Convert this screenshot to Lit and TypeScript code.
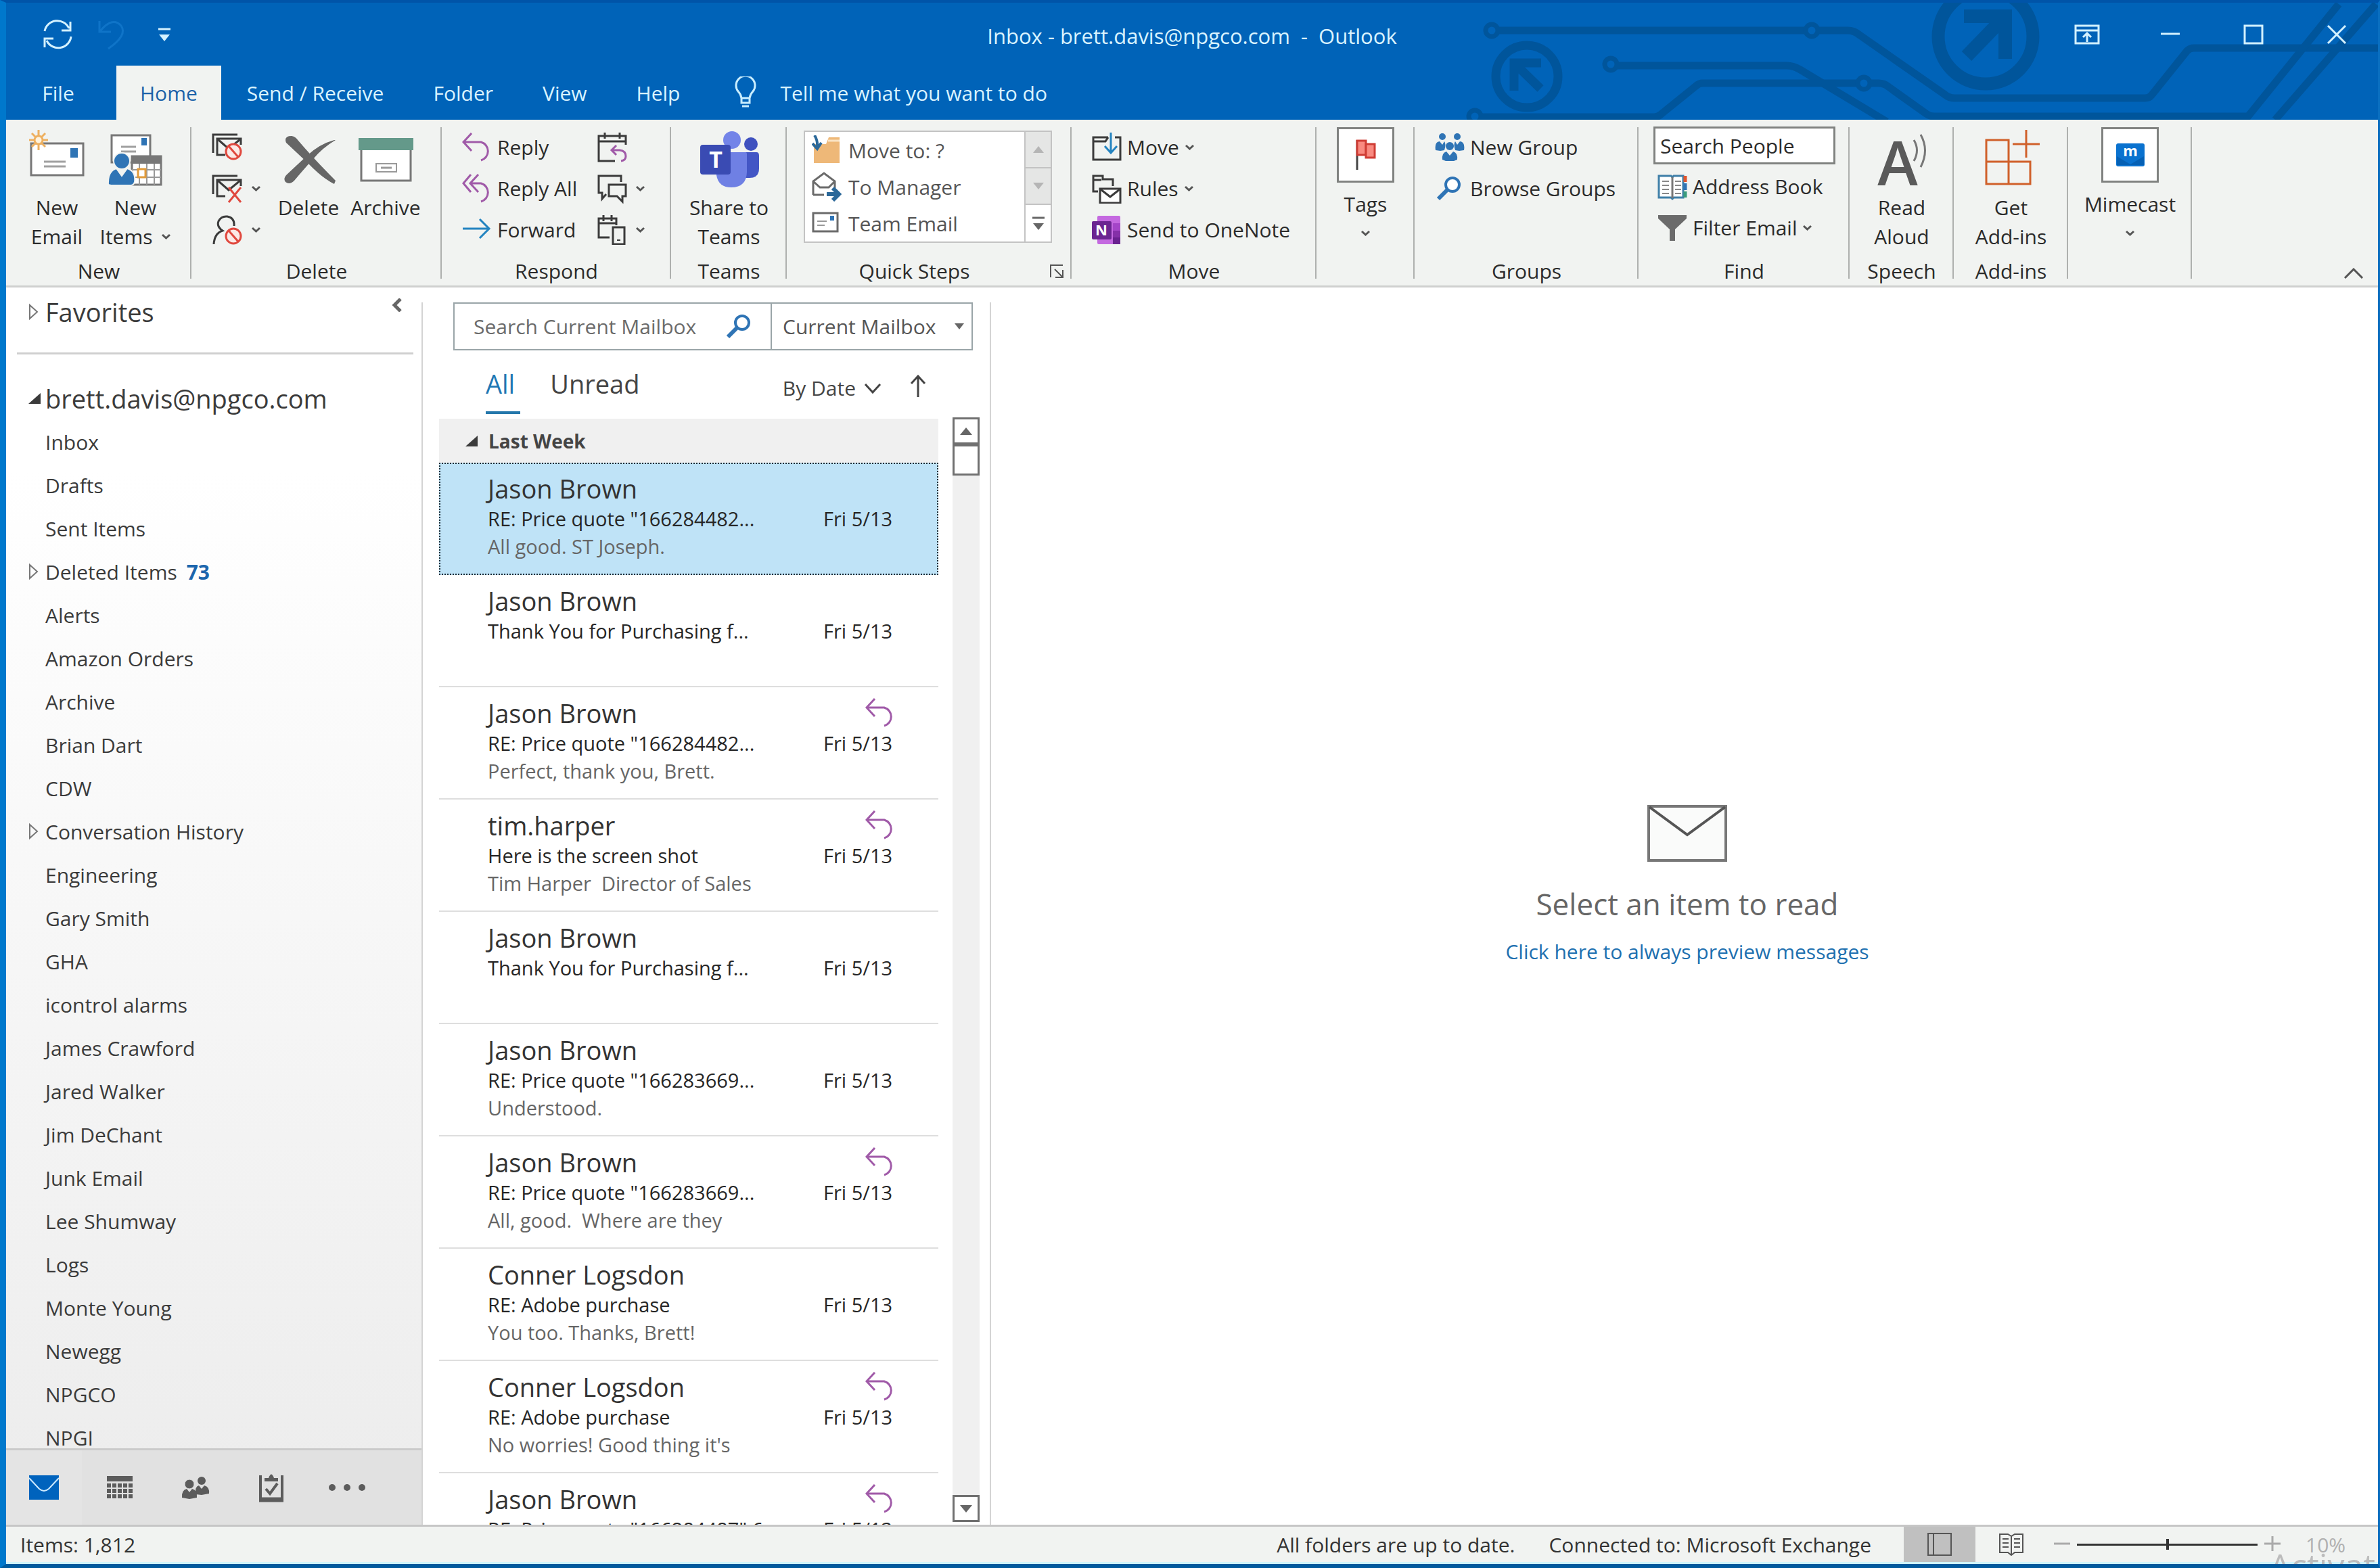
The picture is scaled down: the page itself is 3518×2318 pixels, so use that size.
import { LitElement, html, svg, css, nothing } from "lit";
import { customElement, property, state } from "lit/decorators.js";
import { classMap } from "lit/directives/class-map.js";

const INK = "#3b3b3b";
const BLUE = "#2f74b5";
const PURPLE = "#a05aa8";
const RED = "#e0483e";

/* ---------- shared fragments ---------- */

const frame = (w: number, h: number, body: unknown) =>
  html`<svg width=${w} height=${h} viewBox="0 0 ${w} ${h}" fill="none" aria-hidden="true">${body}</svg>`;

const prohibit = (x: number, y: number) => svg`
  <circle cx=${x} cy=${y} r="11" fill="#fbe9e6" stroke=${RED} stroke-width="3"/>
  <path d="M${x - 7} ${y - 8}L${x + 7} ${y + 8}" stroke=${RED} stroke-width="3"/>`;

const stackedMail = svg`
  <path d="M2 30V3H38" stroke=${INK} stroke-width="3"/>
  <path d="M43 18V9H8V33H20" stroke=${INK} stroke-width="3"/>
  <path d="M9 10L25 24L42 10" stroke=${INK} stroke-width="3"/>`;

const chevron = (w = 15, h = 9, color = "#555", stroke = 3) =>
  frame(w, h, svg`<path d="M2 2L${w / 2} ${h - 2}L${w - 2} 2" stroke=${color} stroke-width=${stroke}/>`);

const solidArrow = (down: boolean, w = 18, h = 11, color = "#666") =>
  frame(w, h, svg`<path d=${down ? `M0 0H${w}L${w / 2} ${h}Z` : `M0 ${h}H${w}L${w / 2} 0Z`} fill=${color}/>`);

const overflowArrow = (color: string) =>
  frame(18, 22, svg`<path d="M0 3H18" stroke=${color} stroke-width="3"/><path d="M1 11H17L9 21Z" fill=${color}/>`);

const openTriangle = frame(16, 26, svg`<path d="M2 3V23L13 13Z" stroke="#777" stroke-width="2"/>`);
const closedTriangle = frame(18, 16, svg`<path d="M18 0V16H0Z" fill=${INK}/>`);

const magnifier = frame(38, 38, svg`
  <circle cx="24" cy="13" r="10" fill="#fff" stroke=${BLUE} stroke-width="4"/>
  <path d="M17 20L3 34" stroke=${BLUE} stroke-width="6"/>`);

const replyGlyph = (color = PURPLE) => frame(44, 44, svg`
  <path d="M14 1L2 14L14 27M2 14H28A14 14 0 0 1 28 41" stroke=${color} stroke-width="3"/>`);

/* ---------- ribbon icons, large (84 x 98) ---------- */

const newEmail = frame(84, 98, svg`
  <rect x="4" y="25" width="77" height="47" fill="#fff" stroke="#777" stroke-width="3"/>
  <rect x="62" y="32" width="11" height="14" fill=${BLUE}/>
  <path d="M23 52H55M23 59H55" stroke="#a0a0a0" stroke-width="3"/>
  <path d="M15 5V35M1 20H29M5 10L25 30M25 10L5 30" stroke="#eeb060" stroke-width="3"/>
  <circle cx="15" cy="20" r="6" fill="#fff3dd" stroke="#eeb060" stroke-width="3"/>`);

const newItems = frame(84, 98, svg`
  <rect x="7" y="13" width="57" height="40" fill="#fff" stroke="#777" stroke-width="3"/>
  <rect x="51" y="17" width="8" height="11" fill=${BLUE}/>
  <path d="M21 30H43M21 37H43" stroke="#a0a0a0" stroke-width="3"/>
  <rect x="37" y="44" width="43" height="42" fill="#fff" stroke="#777" stroke-width="3"/>
  <rect x="36" y="43" width="45" height="12" fill="#777"/>
  <path d="M37 64H80M37 75H80M48 55V86M59 55V86M70 55V86" stroke="#999" stroke-width="2"/>
  <rect x="46" y="63" width="11" height="12" fill="#fff" stroke="#e09a3a" stroke-width="3"/>
  <circle cx="22" cy="51" r="12" fill=${BLUE} stroke="#f1f3f1" stroke-width="2"/>
  <path d="M2 86Q1 66 14 62L22 73L30 62Q43 66 41 82Q40 86 36 87H6Z" fill=${BLUE} stroke="#f1f3f1" stroke-width="2"/>`);

const deleteX = frame(84, 98, svg`
  <path d="M9 24Q5 14 17 14Q23 15 27 21Q50 48 82 80L80 85Q62 76 42 55Q24 38 9 24Z" fill="#666"/>
  <path d="M82 20Q62 32 49 48Q36 62 21 80Q14 87 8 82Q4 77 10 71Q26 56 40 43Q58 26 80 20Z" fill="#666"/>`);

const archiveBox = frame(84, 98, svg`
  <rect x="6" y="30" width="73" height="50" fill="#fff" stroke="#777" stroke-width="3"/>
  <rect x="2" y="17" width="81" height="18" fill="#64998a"/>
  <rect x="28" y="55" width="30" height="12" fill="#fff" stroke="#999" stroke-width="2"/>
  <path d="M35 61H51" stroke="#999" stroke-width="3"/>`);

const teams = frame(88, 98, svg`
  <circle cx="76" cy="26" r="10" fill="#3f51bf"/>
  <path d="M62 38H84Q88 38 88 43V62Q88 76 74 76H62Z" fill="#4356c5"/>
  <circle cx="48" cy="20" r="13" fill="#7384e8"/>
  <path d="M26 38H68Q70 38 70 41V66Q70 90 47 90Q28 90 25 72Z" fill="#6f80e4"/>
  <rect x="1" y="27" width="45" height="44" rx="4" fill="#3a4bb3"/>
  <text x="24" y="61" text-anchor="middle" font-size="34" font-weight="700" fill="#fff">T</text>`);

const readAloud = frame(84, 98, svg`
  <text x="36" y="87" text-anchor="middle" font-size="90" font-weight="600" fill="#5a5a5a">A</text>
  <path d="M60 20Q69 35 60 51M70 12Q83 35 70 60" stroke="#777" stroke-width="3"/>`);

const addIns = frame(88, 98, svg`
  <path d="M7 20H40V52H7ZM7 52H40V85H7ZM40 52H72V85H40Z" stroke="#d0602a" stroke-width="3"/>
  <path d="M66 5V46M46 26H86" stroke="#d0602a" stroke-width="3"/>`);

const flag = frame(79, 76, svg`
  <path d="M27 16V60" stroke="#444" stroke-width="3"/>
  <path d="M27 17H40V38H27Z" fill="#f98a80" stroke="#cf3c34" stroke-width="3"/>
  <path d="M40 22H53V42H40Z" fill="#f98a80" stroke="#cf3c34" stroke-width="3"/>`);

const mimecast = frame(79, 76, svg`
  <rect x="19" y="21" width="42" height="34" rx="3" fill="#0a72cf"/>
  <path d="M20 40L40 52L60 40V53H20Z" fill="#0560b4"/>
  <text x="40" y="40" text-anchor="middle" font-size="22" font-weight="700" fill="#fff">m</text>`);

/* ---------- ribbon icons, small (44 x 44) ---------- */

const ignore = frame(46, 44, svg`${stackedMail}${prohibit(32, 28)}`);
const cleanUp = frame(46, 44, svg`${stackedMail}<path d="M25 20L43 42M43 20L25 42" stroke=${RED} stroke-width="3"/>`);
const junk = frame(46, 44, svg`
  <path d="M3 43Q4 27 16 23Q7 17 10 9Q14 1 23 2Q34 4 33 16" stroke=${INK} stroke-width="3"/>${prohibit(32, 31)}`);
const replyAll = frame(44, 44, svg`
  <path d="M13 1L2 14L13 27M24 1L12 14L24 27M12 14H28A14 14 0 0 1 28 41" stroke=${PURPLE} stroke-width="3"/>`);
const forward = frame(44, 44, svg`<path d="M1 20H40M26 6L40 20L26 34" stroke="#2484c0" stroke-width="3"/>`);
const meeting = frame(44, 44, svg`
  <path d="M42 18V5H2V42H26M2 13H42M11 0V9M33 0V9" stroke=${INK} stroke-width="3"/>
  <path d="M28 19L21 26L28 33M21 26H33Q42 27 42 35Q42 41 35 42" stroke=${PURPLE} stroke-width="3"/>`);
const chat = frame(44, 44, svg`
  <path d="M35 12V3H2V28H7V37L13 30" stroke=${INK} stroke-width="3"/>
  <path d="M17 16H42V33H37V41L29 33H17Z" stroke=${INK} stroke-width="3"/>`);
const moreRespond = frame(44, 44, svg`
  <path d="M28 15V5H2V33H18M2 12H28M9 0V9M21 0V9" stroke=${INK} stroke-width="3"/>
  <rect x="23" y="18" width="17" height="25" stroke=${INK} stroke-width="3"/><path d="M29 37H34" stroke=${INK} stroke-width="2"/>`);

const folderStep = frame(44, 44, svg`
  <path d="M3 13H21L25 3H41V41H3Z" fill="#eeb878"/><path d="M24 8H41" stroke="#fae3c3" stroke-width="3"/>
  <path d="M4 0Q9 8 8 18M1 12L8 20L14 11" stroke="#2b6899" stroke-width="4"/>`);
const managerStep = frame(44, 44, svg`
  <path d="M2 34V14L18 2L34 14V24M2 14L12 23H25L34 14M2 34H18" stroke="#6b6b6b" stroke-width="3"/>
  <path d="M22 33H38M31 24L40 33L31 42" stroke="#2b6899" stroke-width="6"/>`);
const teamStep = frame(44, 44, svg`
  <rect x="2" y="7" width="36" height="27" fill="#fff" stroke="#6b6b6b" stroke-width="3"/>
  <rect x="27" y="11" width="6" height="7" fill=${BLUE}/><path d="M8 19H22M8 25H19" stroke="#999" stroke-width="2"/>`);

const moveIcon = frame(44, 44, svg`
  <path d="M24 7H2V40H42V7H34M2 13H20L24 7" stroke=${INK} stroke-width="3"/>
  <path d="M28 0V29M19 20L28 30L37 20" stroke="#2484c0" stroke-width="3"/>`);
const rulesIcon = frame(44, 44, svg`
  <path d="M9 26H2V3H16V8H31V18M2 9H14" stroke=${INK} stroke-width="3"/>
  <rect x="12" y="22" width="30" height="21" fill="#fff" stroke=${INK} stroke-width="3"/><path d="M13 23L27 34L41 23" stroke=${INK} stroke-width="3"/>`);
const oneNote = frame(44, 44, svg`
  <rect x="8" y="1" width="34" height="42" rx="2" fill="#c469e0"/><rect x="31" y="12" width="11" height="11" fill="#a445c8"/>
  <rect x="31" y="23" width="11" height="10" fill="#8530a8"/><rect x="31" y="33" width="11" height="10" fill="#6a2190"/>
  <rect x="0" y="9" width="29" height="27" rx="2" fill="#6b2591"/>
  <text x="14" y="30" text-anchor="middle" font-size="22" font-weight="700" fill="#fff">N</text>`);
const newGroup = frame(44, 44, svg`
  <g fill=${BLUE}><circle cx="11" cy="6" r="5"/><circle cx="33" cy="6" r="5"/><circle cx="22" cy="20" r="6"/>
  <path d="M1 26Q-1 14 7 13L11 18L14 13Q17 17 14 26L8 27ZM43 26Q45 14 37 13L33 18L30 13Q27 17 30 26L36 27Z"/>
  <path d="M11 40Q10 30 17 28L22 34L27 28Q34 30 33 40L28 42H16Z"/></g>`);
const browseGroups = frame(44, 38, svg`
  <circle cx="26" cy="13" r="10" fill="#fff" stroke=${BLUE} stroke-width="4"/>
  <path d="M19 20L5 34" stroke=${BLUE} stroke-width="6"/>`);
const addressBook = frame(44, 44, svg`
  <path d="M2 6V38H20L22 40L24 38H38V6H24L22 8L20 6Z" fill="#fff" stroke="#3f7fa8" stroke-width="3"/>
  <path d="M22 8V39" stroke="#777" stroke-width="3"/>
  <path d="M7 14H17M7 20H17M7 26H17M7 32H17M26 14H35M26 20H35M26 26H35M26 32H35" stroke="#888" stroke-width="2"/>
  <path d="M41 6V15" stroke="#e0552c" stroke-width="5"/><path d="M41 17V27" stroke="#2f74b5" stroke-width="5"/><path d="M41 29V38" stroke="#3a9c7c" stroke-width="5"/>`);
const funnel = frame(44, 44, svg`<path d="M1 3H43V8L26 24V41H18V24L1 8Z" fill="#6b6b6b"/>`);

/* ---------- navigation and status icons ---------- */

const navMail = frame(44, 36, svg`<rect width="44" height="36" fill="#0063bd"/>
  <path d="M0 4L15 20Q22 26 29 20L44 4" stroke="#cdeaff" stroke-width="2"/>`);
const navCalendar = frame(40, 34, svg`<rect x="1" width="38" height="8" fill="#5c5c5c"/>
  <path d="M1 14H39M1 22H39M1 30H39" stroke="#5c5c5c" stroke-width="6" stroke-dasharray="6 2"/>`);
const navPeople = frame(42, 34, svg`<g fill="#5c5c5c"><circle cx="30" cy="7" r="6"/>
  <path d="M21 27Q20 15 26 14L30 19L34 14Q42 16 41 26L30 28Z"/>
  <circle cx="12" cy="12" r="7" stroke="#e1e1e1" stroke-width="1"/><path d="M1 32Q0 21 8 19L12 24L16 19Q24 21 23 32L12 34Z"/></g>`);
const navTasks = frame(38, 44, svg`<path d="M3 4V41H35V4" stroke="#5c5c5c" stroke-width="4"/><path d="M1 40H37" stroke="#5c5c5c" stroke-width="7"/>
  <path d="M9 13V8H15Q19 -3 23 8H29V13Z" fill="#5c5c5c"/><path d="M11 24L17 31L28 16" stroke="#5c5c5c" stroke-width="4"/>`);
const navMore = frame(56, 12, svg`<g fill="#5c5c5c"><circle cx="6" cy="6" r="5"/><circle cx="28" cy="6" r="5"/><circle cx="50" cy="6" r="5"/></g>`);

const normalView = frame(38, 36, svg`<rect x="2" y="2" width="34" height="32" stroke="#555" stroke-width="2"/><path d="M10 2V34" stroke="#555" stroke-width="2"/>`);
const readingView = frame(38, 36, svg`<path d="M19 6L14 3H2V30H14L19 34L24 30H36V3H24ZM19 6V34" stroke="#555" stroke-width="2"/>
  <path d="M6 10H15M6 16H15M6 22H15M23 10H32M23 16H32M23 22H32" stroke="#555" stroke-width="2"/>`);

const syncIcon = frame(48, 46, svg`
  <path d="M4 18A19 19 0 0 1 40 14M43 26A19 19 0 0 1 7 32M42 4V17H29M4 42V29H17" stroke="#d3f1ff" stroke-width="3"/>`);
const undoIcon = frame(44, 46, svg`<path d="M3 3V19H20M4 18Q22 -4 35 10Q45 24 16 44" stroke="#0f74c8" stroke-width="3"/>`);
const bulb = frame(34, 48, svg`<path d="M11 32Q10 26 6 22A14 14 0 1 1 28 22Q24 26 23 32ZM11 32V39H23V32M12 44H22" stroke="#c9eeff" stroke-width="3"/>`);

const winRibbon = frame(38, 30, svg`<path d="M2 2H36V28H2ZM2 9H36M19 26V13M13 19L19 13L25 19" stroke="#d3f1ff" stroke-width="3"/>`);
const winMin = frame(30, 30, svg`<path d="M1 14H29" stroke="#d3f1ff" stroke-width="3"/>`);
const winMax = frame(30, 30, svg`<rect x="2" y="2" width="26" height="26" stroke="#d3f1ff" stroke-width="3"/>`);
const winClose = frame(30, 30, svg`<path d="M2 2L28 28M28 2L2 28" stroke="#d3f1ff" stroke-width="3"/>`);

/* Circuit-board decoration of the title area */
const circuit = html`<svg class="circuit" width="1438" height="177" viewBox="2080 0 1438 177" fill="none" stroke="#00559b" stroke-width="11" aria-hidden="true">
  <circle cx="2208" cy="45" r="9" stroke-width="7"/><path d="M2218 45H2671"/><circle cx="2681" cy="45" r="9" stroke-width="7"/>
  <path d="M2691 45H2734Q2744 45 2752 52L2878 140Q2884 145 2892 145H3174Q3180 145 3183 141L3236 75Q3240 71 3246 71H3518"/>
  <circle cx="2384" cy="95" r="9" stroke-width="7"/><path d="M2394 97H2644Q2654 97 2664 103L2792 180"/>
  <circle cx="2183" cy="172" r="9" stroke-width="7"/>
  <path d="M2193 173H2448Q2454 173 2458 169L2510 127Q2514 123 2520 123H2748"/><circle cx="2758" cy="123" r="9" stroke-width="7"/>
  <path d="M2768 123H2780Q2788 123 2794 128L2850 168Q2855 172 2862 172H3326L3460 6M3366 177L3515 6"/>
  <circle cx="2260" cy="113" r="46" stroke-width="13"/><path d="M2281 93H2241V134M2241 93L2280 131" stroke-width="13"/>
  <circle cx="2938" cy="54" r="70" stroke-width="19"/><path d="M2906 24H2967V87M2967 24L2910 83" stroke-width="20"/>
</svg>`;

/* ---------- data ---------- */

interface Folder { name: string; count?: number; expandable?: boolean; }
interface Message { from: string; subject: string; preview: string; replied?: boolean; }

const FOLDERS: Folder[] = [
  { name: "Inbox" }, { name: "Drafts" }, { name: "Sent Items" },
  { name: "Deleted Items", count: 73, expandable: true },
  { name: "Alerts" }, { name: "Amazon Orders" }, { name: "Archive" }, { name: "Brian Dart" }, { name: "CDW" },
  { name: "Conversation History", expandable: true },
  { name: "Engineering" }, { name: "Gary Smith" }, { name: "GHA" }, { name: "icontrol alarms" },
  { name: "James Crawford" }, { name: "Jared Walker" }, { name: "Jim DeChant" }, { name: "Junk Email" },
  { name: "Lee Shumway" }, { name: "Logs" }, { name: "Monte Young" }, { name: "Newegg" },
  { name: "NPGCO" }, { name: "NPGI" },
];

const MESSAGES: Message[] = [
  { from: "Jason Brown", subject: "RE: Price quote \"166284482...", preview: "All good. ST Joseph." },
  { from: "Jason Brown", subject: "Thank You for Purchasing f...", preview: "" },
  { from: "Jason Brown", subject: "RE: Price quote \"166284482...", preview: "Perfect, thank you, Brett.", replied: true },
  { from: "tim.harper", subject: "Here is the screen shot", preview: "Tim Harper  Director of Sales", replied: true },
  { from: "Jason Brown", subject: "Thank You for Purchasing f...", preview: "" },
  { from: "Jason Brown", subject: "RE: Price quote \"166283669...", preview: "Understood." },
  { from: "Jason Brown", subject: "RE: Price quote \"166283669...", preview: "All, good.  Where are they", replied: true },
  { from: "Conner Logsdon", subject: "RE: Adobe purchase", preview: "You too. Thanks, Brett!" },
  { from: "Conner Logsdon", subject: "RE: Adobe purchase", preview: "No worries! Good thing it's", replied: true },
  { from: "Jason Brown", subject: "RE: Price quote \"166284487\" 6...", preview: "", replied: true },
];

const base = css`
  * { box-sizing: border-box; }
  button, input, select { font: inherit; color: inherit; background: none; border: 0; padding: 0; margin: 0; outline: 0; text-align: inherit; border-radius: 0; }
  ul { list-style: none; margin: 0; padding: 0; }
  svg { display: block; flex: none; font-family: "Open Sans", sans-serif; }
`;

/* ---------- title bar and tabs ---------- */

@customElement("title-area")
class TitleArea extends LitElement {
  static styles = [base, css`
    :host { display: block; position: relative; background: #0063b8; color: #d9f3ff; overflow: hidden; }
    .circuit { position: absolute; right: 0; bottom: 0; }
    .bar { position: relative; display: grid; grid-template-columns: 1fr auto 1fr; height: 93px; align-items: center; padding-top: 4px; }
    .quick { display: flex; align-items: center; gap: 34px; padding: 0 0 4px 53px; }
    .quick button:last-child { padding-left: 12px; }
    .windows { display: flex; justify-content: flex-end; height: 84px; }
    .windows button { width: 123px; display: flex; align-items: center; justify-content: center; padding-bottom: 4px; }
    .title { font-size: 31px; line-height: 42px; white-space: pre; }
    .tabs { position: relative; display: flex; height: 80px; align-items: stretch; gap: 3px; }
    .tabs a { color: inherit; text-decoration: none; padding: 0 35px; line-height: 82px; }
    .tabs .file { width: 160px; text-align: center; padding: 0 6px 0 0; }
    .tabs .active { background: #f1f3f1; color: #1c62a8; }
    .tell { display: flex; align-items: center; gap: 34px; margin-left: 42px; }
  `];

  render() {
    return html`
      ${circuit}
      <div class="bar">
        <div class="quick">
          <button aria-label="Send and receive">${syncIcon}</button>
          <button aria-label="Undo">${undoIcon}</button>
          <button aria-label="Customize toolbar">${overflowArrow("#d3f1ff")}</button>
        </div>
        <div class="title">Inbox - brett.davis@npgco.com  -  Outlook</div>
        <div class="windows">
          <button aria-label="Ribbon options">${winRibbon}</button>
          <button aria-label="Minimize">${winMin}</button>
          <button aria-label="Maximize">${winMax}</button>
          <button aria-label="Close">${winClose}</button>
        </div>
      </div>
      <nav class="tabs">
        <a class="file" href="#file">File</a>
        <a class="active" href="#home">Home</a>
        ${["Send / Receive", "Folder", "View", "Help"].map((t) => html`<a href="#tab">${t}</a>`)}
        <button class="tell">${bulb}<span>Tell me what you want to do</span></button>
      </nav>`;
  }
}

/* ---------- ribbon ---------- */

@customElement("ribbon-bar")
class RibbonBar extends LitElement {
  static styles = [base, css`
    :host { display: grid; grid-template-columns: 274px 370px 339px 171px 421px 362px 145px 331px 312px 154px 169px 183px 1fr;
      height: 248px; background: #f1f3f1; border-bottom: 3px solid #cfd0cf; color: #2b2b2b; line-height: 43px; }
    .group { display: flex; flex-direction: column; padding-top: 10px; min-width: 0;
      background: linear-gradient(#aeb0ae, #aeb0ae) right 0 top 11px / 2px 224px no-repeat; }
    .content { flex: 1; display: flex; align-items: flex-start; min-height: 0; }
    .center { justify-content: center; }
    .inset { padding-left: 30px; }
    .near { padding-left: 18px; gap: 2px; }
    .caption { display: flex; height: 43px; }
    .caption span { flex: 1; text-align: center; }
    .launcher { width: 44px; display: flex; align-items: center; justify-content: center; }
    .big { width: 114px; display: flex; flex-direction: column; align-items: center; white-space: nowrap; }
    .big .line { display: flex; align-items: center; gap: 12px; }
    .wide { width: 140px; }
    .rows { display: flex; flex-direction: column; }
    .row { height: 61px; display: flex; align-items: center; gap: 8px; white-space: nowrap; }
    .first { width: 200px; }
    .stub { width: 86px; gap: 12px; }
    .gallery { margin: 6px 0 0 25px; width: 367px; height: 166px; display: flex; background: #fff; border: 2px solid #c3c3c3; color: #555; }
    .steps { flex: 1; padding: 0 0 0 10px; }
    .step { height: 54px; display: flex; align-items: center; gap: 10px; width: 100%; }
    .scroll { width: 39px; display: grid; grid-template-rows: 1fr 1fr 1fr; border-left: 2px solid #c3c3c3; }
    .scroll button { display: flex; align-items: center; justify-content: center; background: #e5e6e5; border-bottom: 2px solid #c3c3c3; }
    .scroll button:last-child { background: #fff; border-bottom: 0; }
    .boxed { width: 160px; display: flex; flex-direction: column; align-items: center; padding-top: 1px; }
    .boxed .tile { border: 3px solid #808280; background: #fff; margin-bottom: 10px; }
    .boxed .arrow { height: 43px; display: flex; align-items: center; }
    .find { padding-left: 22px; }
    .people { width: 269px; height: 56px; margin-bottom: 2px; border: 3px solid #808280; background: #fff; padding: 0 7px; }
    .people::placeholder { color: #2b2b2b; opacity: 1; }
    .find .row { padding-left: 6px; gap: 8px; }
    .collapse { align-self: end; justify-self: end; margin: 0 21px 10px 0; }
  `];

  private big(icon: unknown, lines: string[], drop = false, wide = false) {
    return html`<button class=${classMap({ big: true, wide })}>${icon}
      ${lines.map((l, i) => html`<span class="line">${l}${drop && i === lines.length - 1 ? chevron() : nothing}</span>`)}
    </button>`;
  }
  private row(icon: unknown, label: string, drop = false) {
    return html`<button class="row">${icon}<span>${label}</span>${drop ? chevron() : nothing}</button>`;
  }
  private stub(icon: unknown, label: string, drop = true) {
    return html`<button class="row stub" aria-label=${label}>${icon}${drop ? chevron() : nothing}</button>`;
  }
  private boxed(icon: unknown, label: string) {
    return html`<section class="group"><div class="content center">
      <button class="boxed"><span class="tile">${icon}</span><span>${label}</span><span class="arrow">${chevron()}</span></button>
    </div></section>`;
  }
  private group(name: string, cls: string, body: unknown, launcher = false) {
    return html`<section class="group" aria-label=${name}>
      <div class="content ${cls}">${body}</div>
      <div class="caption"><span>${name}</span>${launcher
        ? html`<button class="launcher" aria-label="Quick Steps settings">${frame(22, 22, svg`<path d="M2 20V2H20M8 8L19 19M20 9V20H9" stroke="#555" stroke-width="2"/>`)}</button>`
        : nothing}</div>
    </section>`;
  }

  render() {
    return html`
      ${this.group("New", "near", html`
        ${this.big(newEmail, ["New", "Email"])}${this.big(newItems, ["New", "Items"], true)}`)}
      ${this.group("Delete", "inset", html`
        <div class="rows">${this.stub(ignore, "Ignore", false)}${this.stub(cleanUp, "Clean up")}${this.stub(junk, "Junk")}</div>
        ${this.big(deleteX, ["Delete"])}${this.big(archiveBox, ["Archive"])}`)}
      ${this.group("Respond", "inset", html`
        <div class="rows first">${this.row(replyGlyph(), "Reply")}${this.row(replyAll, "Reply All")}${this.row(forward, "Forward")}</div>
        <div class="rows">${this.stub(meeting, "Meeting", false)}${this.stub(chat, "IM")}${this.stub(moreRespond, "More")}</div>`)}
      ${this.group("Teams", "center", this.big(teams, ["Share to", "Teams"], false, true))}
      ${this.group("Quick Steps", "", html`
        <div class="gallery">
          <div class="steps">
            <button class="step">${folderStep}<span>Move to: ?</span></button>
            <button class="step">${managerStep}<span>To Manager</span></button>
            <button class="step">${teamStep}<span>Team Email</span></button>
          </div>
          <div class="scroll">
            <button aria-label="Up">${solidArrow(false, 16, 10, "#b5b5b5")}</button>
            <button aria-label="Down">${solidArrow(true, 16, 10, "#b5b5b5")}</button>
            <button aria-label="More">${overflowArrow("#666")}</button>
          </div>
        </div>`, true)}
      ${this.group("Move", "inset", html`<div class="rows">
        ${this.row(moveIcon, "Move", true)}${this.row(rulesIcon, "Rules", true)}${this.row(oneNote, "Send to OneNote")}</div>`)}
      ${this.boxed(flag, "Tags")}
      ${this.group("Groups", "inset", html`<div class="rows">
        ${this.row(newGroup, "New Group")}${this.row(browseGroups, "Browse Groups")}</div>`)}
      ${this.group("Find", "find", html`<div class="rows">
        <input class="people" type="text" aria-label="Search People" placeholder="Search People">
        ${this.row(addressBook, "Address Book")}${this.row(funnel, "Filter Email", true)}</div>`)}
      ${this.group("Speech", "center", this.big(readAloud, ["Read", "Aloud"]))}
      ${this.group("Add-ins", "center", this.big(addIns, ["Get", "Add-ins"], false, true))}
      ${this.boxed(mimecast, "Mimecast")}
      <button class="collapse" aria-label="Collapse ribbon">${frame(30, 16, svg`<path d="M2 15L15 2L28 15" stroke="#555" stroke-width="3"/>`)}</button>`;
  }
}

/* ---------- folder pane ---------- */

@customElement("folder-pane")
class FolderPane extends LitElement {
  static styles = [base, css`
    :host { display: flex; flex-direction: column; min-height: 0; color: #3b3b3b; background: linear-gradient(#fff 15%, #ececec); }
    .tree { flex: 1; min-height: 0; overflow: hidden; padding-top: 4px; }
    .head, .folder { width: 100%; height: 64px; display: flex; align-items: center; white-space: nowrap; }
    .head { font-size: 38px; }
    .twist { width: 58px; padding-left: 33px; flex: none; display: flex; }
    .favorites { display: flex; align-items: flex-start; }
    .pin { margin: 12px 29px 0 0; }
    .rule { height: 3px; background: #cfcfcf; margin: 28px 12px 33px 16px; }
    .count { color: #1c66ad; font-weight: 700; margin-left: 14px; }
    .nav { display: flex; height: 113px; background: #e1e1e1; border-top: 3px solid #cbcbcb; }
    .nav button { width: 112px; display: flex; align-items: center; justify-content: center; }
    .nav .on { background: #e4e4e4; }
  `];

  render() {
    return html`
      <div class="tree">
        <div class="favorites">
          <button class="head"><span class="twist">${openTriangle}</span>Favorites</button>
          <button class="pin" aria-label="Minimize folder pane">${frame(15, 20, svg`<path d="M13 1L4 10L13 19" stroke="#666" stroke-width="5"/>`)}</button>
        </div>
        <div class="rule"></div>
        <button class="head"><span class="twist">${closedTriangle}</span>brett.davis@npgco.com</button>
        <ul>${FOLDERS.map((f) => html`<li><button class="folder">
          <span class="twist">${f.expandable ? openTriangle : nothing}</span>${f.name}
          ${f.count ? html`<span class="count">${f.count}</span>` : nothing}
        </button></li>`)}</ul>
      </div>
      <nav class="nav">
        <button class="on" aria-label="Mail">${navMail}</button>
        <button aria-label="Calendar">${navCalendar}</button>
        <button aria-label="People">${navPeople}</button>
        <button aria-label="Tasks">${navTasks}</button>
        <button aria-label="More">${navMore}</button>
      </nav>`;
  }
}

/* ---------- message list ---------- */

@customElement("message-row")
class MessageRow extends LitElement {
  @property({ attribute: false }) message!: Message;
  @property({ type: Boolean, reflect: true }) selected = false;

  static styles = [base, css`
    :host { display: block; height: 166px; border-bottom: 2px solid #dedede; }
    :host([selected]) { background: #bfe3f7; border: 2px dotted #1f2d38; }
    .row { width: 100%; height: 100%; display: grid; grid-template-columns: 1fr 106px; grid-template-rows: 48px 41px 40px;
      padding: 14px 64px 0 72px; white-space: pre; font-size: 29px; align-items: center; color: #262626; }
    :host([selected]) .row { padding: 12px 62px 0 70px; }
    .from { font-size: 38px; color: #333; }
    .subject { overflow: hidden; }
    .subject, .date { font-weight: 500; }
    .preview { color: #666; }
    .flag { justify-self: end; }
  `];

  render() {
    const m = this.message;
    return html`<button class="row">
      <span class="from">${m.from}</span>
      <span class="flag">${m.replied ? replyGlyph() : nothing}</span>
      <span class="subject">${m.subject}</span><span class="date">Fri 5/13</span>
      <span class="preview">${m.preview}</span>
    </button>`;
  }
}

@customElement("message-list")
class MessageList extends LitElement {
  @state() private current = 0;

  static styles = [base, css`
    :host { display: flex; flex-direction: column; min-height: 0; color: #444;
      background: linear-gradient(#d4d4d4, #d4d4d4) left 0 top 22px / 2px 100% no-repeat, linear-gradient(#d4d4d4, #d4d4d4) right 0 top 22px / 2px 100% no-repeat, #fff; }
    .search { display: flex; height: 71px; margin: 22px 27px 0 47px; border: 2px solid #9aa5a8; }
    .search input { flex: 1; min-width: 0; padding-left: 28px; }
    .search input::placeholder { color: #6b6b6b; opacity: 1; }
    .go { width: 66px; }
    .scope { width: 297px; border-left: 2px solid #9aa5a8; padding: 0 11px 0 16px; display: flex; align-items: center; }
    .scope select { flex: 1; min-width: 0; appearance: none; color: #555; }
    .filter { display: flex; height: 94px; padding: 0 96px 0 95px; font-size: 38px; }
    .filter > button { height: 94px; padding-bottom: 0; line-height: 98px; }
    .all { color: #1f77b4; border-bottom: 4px solid #2477ab; padding-right: 8px; }
    .filter .unread { margin-left: 44px; flex: 1; }
    .filter .sort { font-size: 30px; line-height: 112px; display: flex; align-items: center; gap: 12px; height: 112px; }
    .filter .order { display: flex; align-items: center; height: 106px; margin-left: 42px; }
    .scroller { flex: 1; min-height: 0; display: flex; gap: 21px; padding: 0 17px 0 26px; margin-top: 5px; }
    .items { flex: 1; min-width: 0; overflow: hidden; padding-top: 2px; }
    .period { width: 100%; height: 65px; background: #f0f0f0; display: flex; align-items: center; font-size: 28px; font-weight: 700; color: #444; padding-left: 39px; gap: 16px; }
    .track { width: 40px; background: #f0f0f0; display: flex; flex-direction: column; margin-bottom: 4px; }
    .track button { height: 40px; border: 3px solid #707070; background: #fff; display: flex; align-items: center; justify-content: center; }
    .track .thumb { height: 46px; border: 3px solid #707070; background: #fff; margin-bottom: auto; }
  `];

  render() {
    return html`
      <div class="search">
        <input type="text" aria-label="Search Current Mailbox" placeholder="Search Current Mailbox">
        <button class="go" aria-label="Search">${magnifier}</button>
        <label class="scope"><select aria-label="Search scope"><option>Current Mailbox</option></select>${solidArrow(true, 14, 9)}</label>
      </div>
      <div class="filter">
        <button class="all">All</button>
        <button class="unread">Unread</button>
        <button class="sort">By Date ${chevron(26, 16, "#444", 3)}</button>
        <button class="order" aria-label="Sort ascending">${frame(24, 34, svg`<path d="M12 33V2M2 13L12 2L22 13" stroke="#444" stroke-width="3"/>`)}</button>
      </div>
      <div class="scroller">
        <div class="items">
          <button class="period">${closedTriangle}<span>Last Week</span></button>
          ${MESSAGES.map((m, i) => html`<message-row .message=${m} ?selected=${i === this.current} @click=${() => (this.current = i)}></message-row>`)}
        </div>
        <div class="track">
          <button aria-label="Scroll up">${solidArrow(false)}</button>
          <div class="thumb"></div>
          <button aria-label="Scroll down">${solidArrow(true)}</button>
        </div>
      </div>`;
  }
}

/* ---------- reading pane ---------- */

@customElement("reading-pane")
class ReadingPane extends LitElement {
  static styles = [base, css`
    :host { display: flex; flex-direction: column; align-items: center; justify-content: center; background: #fff; padding: 0 0 62px 8px; }
    .lead { font-size: 44px; line-height: 60px; color: #666; margin: 32px 0 20px; }
    a { color: #2070b0; text-decoration: none; line-height: 42px; }
  `];

  render() {
    return html`
      ${frame(118, 84, svg`<rect x="2" y="2" width="114" height="80" fill="#fafbfa" stroke="#777" stroke-width="4"/><path d="M3 3L59 44L115 3" stroke="#555" stroke-width="4"/>`)}
      <div class="lead">Select an item to read</div>
      <a href="#preview">Click here to always preview messages</a>`;
  }
}

/* ---------- status bar ---------- */

@customElement("status-strip")
class StatusStrip extends LitElement {
  static styles = [base, css`
    :host { display: flex; height: 58px; align-items: center; background: #f1f3f1; border-top: 3px solid #c6c6c6; border-bottom: 3px solid #cff5fb; color: #333; padding-left: 21px; white-space: nowrap; }
    .items { flex: 1; }
    .link { margin: 0 48px 0 50px; }
    .view { width: 106px; height: 100%; display: flex; align-items: center; justify-content: center; }
    .on { background: #c0c0c0; }
    .zoom { color: #8a8a8a; margin: 0 10px; }
    .slider { appearance: none; width: 267px; height: 20px; background: linear-gradient(#333, #333) center / 100% 3px no-repeat; }
    .slider::-webkit-slider-thumb { appearance: none; width: 4px; height: 16px; background: #333; }
    .percent { color: #b0b0b0; width: 134px; padding-left: 27px; }
  `];

  render() {
    return html`
      <span class="items">Items: 1,812</span>
      <span>All folders are up to date.</span>
      <span class="link">Connected to: Microsoft Exchange</span>
      <button class="view on" aria-label="Normal view">${normalView}</button>
      <button class="view" aria-label="Reading view">${readingView}</button>
      <button class="zoom" aria-label="Zoom out">${frame(24, 24, svg`<path d="M0 11H24" stroke="#aaa" stroke-width="3"/>`)}</button>
      <input class="slider" type="range" min="0" max="100" value="50" aria-label="Zoom">
      <button class="zoom" aria-label="Zoom in">${frame(24, 24, svg`<path d="M0 11H24M12 0V22" stroke="#aaa" stroke-width="3"/>`)}</button>
      <span class="percent">10%</span>`;
  }
}

/* ---------- window ---------- */

@customElement("app-root")
class AppRoot extends LitElement {
  static styles = [base, css`
    :host { display: block; font-family: "Open Sans", "Noto Sans", sans-serif; font-size: 30px; }
    .window { position: relative; height: 100vh; display: grid; grid-template-rows: auto auto minmax(0, 1fr) auto; overflow: hidden;
      border-style: solid; border-width: 4px 3px 6px 9px; border-color: #0054a8 #0a6fc0 #005a9e #0078cc; }
    .body { display: grid; grid-template-columns: 614px 842px minmax(0, 1fr); min-height: 0; background: #fff; }
    .watermark { position: absolute; right: 4px; bottom: -32px; font-size: 50px; line-height: 60px; color: #bcbcbc; pointer-events: none; }
  `];

  render() {
    return html`<div class="window">
      <title-area></title-area>
      <ribbon-bar></ribbon-bar>
      <main class="body">
        <folder-pane></folder-pane>
        <message-list></message-list>
        <reading-pane></reading-pane>
      </main>
      <status-strip></status-strip>
      <div class="watermark">Activat</div>
    </div>`;
  }
}
